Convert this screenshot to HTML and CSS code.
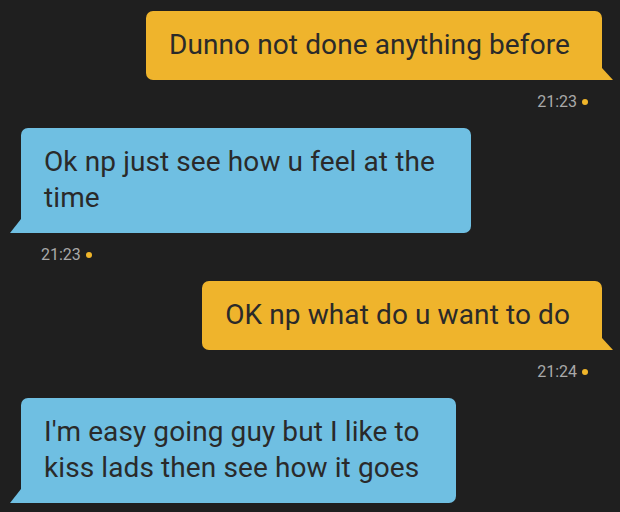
FILE: index.html
```html
<!DOCTYPE html>
<html lang="en">
<head>
    <meta charset="UTF-8">
    <meta name="viewport" content="width=device-width, initial-scale=1.0">
    <title>Chat</title>
    <link rel="stylesheet" href="styles.css">
</head>
<body>
    <div class="chat">
        <!-- sent -->
        <div class="msg msg-out">
            <div class="bubble">Dunno not done anything before</div>
            <div class="time">21:23<span class="dot"></span></div>
        </div>

        <!-- received -->
        <div class="msg msg-in">
            <div class="bubble">Ok np just see how u feel at the<br>time</div>
            <div class="time">21:23<span class="dot"></span></div>
        </div>

        <div class="msg msg-out">
            <div class="bubble">OK np what do u want to do</div>
            <div class="time">21:24<span class="dot"></span></div>
        </div>

        <div class="msg msg-in">
            <div class="bubble">I'm easy going guy but I like to<br>kiss lads then see how it goes</div>
        </div>
    </div>
</body>
</html>
```

FILE: styles.css
```css
body {
    margin: 0;
    background-color: #1f1f1f;
    font-family: Roboto, "Liberation Sans", sans-serif;
    overflow: hidden;
}

.chat {
    padding: 11px 18px 0 21px;
    display: flex;
    flex-direction: column;
}

.msg {
    display: flex;
    flex-direction: column;
}

.msg-out {
    align-items: flex-end;
}

.msg-in {
    align-items: flex-start;
}

.bubble {
    position: relative;
    padding: 16px 32px 17px 23px;
    font-size: 28px;
    line-height: 36px;
    letter-spacing: 0.1px;
    color: #2a2a2a;
    border-radius: 7px;
}

.msg-out .bubble {
    background: #efb42c;
    border-bottom-right-radius: 0;
}

.msg-in .bubble {
    background: #6fbfe2;
    border-bottom-left-radius: 0;
    padding-right: 36px;
}

/* tails */
.bubble::after {
    content: "";
    position: absolute;
    bottom: 0;
    width: 11px;
    height: 12px;
}

.msg-out .bubble::after {
    right: -11px;
    background: #efb42c;
    clip-path: polygon(0 0, 100% 100%, 0 100%);
}

.msg-in .bubble::after {
    left: -11px;
    height: 14px;
    background: #6fbfe2;
    clip-path: polygon(100% 0, 100% 100%, 0 100%);
}

.time {
    display: flex;
    align-items: center;
    margin: 12px 0 16px;
    font-size: 16px;
    line-height: 20px;
    color: #a9a9a9;
}

.msg-out .time {
    padding-right: 14px;
}

.msg-in .time {
    padding-left: 20px;
}

.dot {
    width: 6px;
    height: 6px;
    margin-left: 5px;
    border-radius: 50%;
    background: #f0b52a;
}
```
